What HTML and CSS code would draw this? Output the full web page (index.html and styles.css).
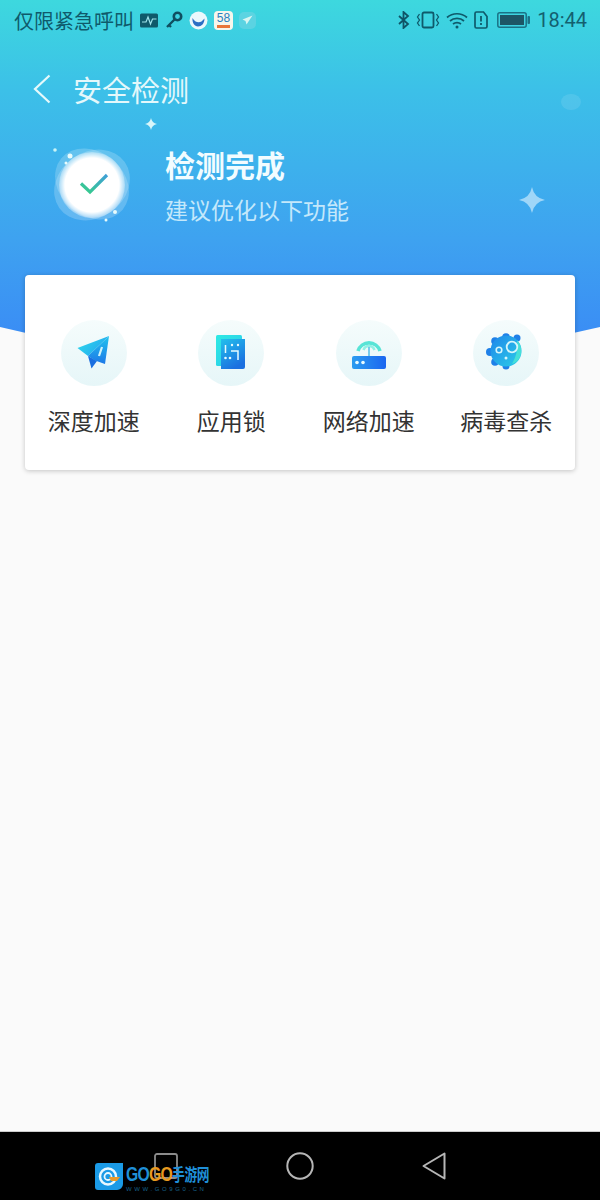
FILE: index.html
```html
<!doctype html>
<html lang="zh-CN">
  <head>
    <meta charset="utf-8" />
    <meta name="viewport" content="width=device-width, initial-scale=1.0" />
    <title>安全检测</title>
    <link rel="stylesheet" href="styles.css">
  </head>
  <body>
    <div id="page">
      <div id="hero">
        <div id="status-bar">
          <div class="status-left">
            <span class="status-text">仅限紧急呼叫</span>
            <svg class="s-pulse" width="19" height="15" viewBox="0 0 19 15"><rect width="18" height="14" y="0.5" rx="1.5" fill="#0f5a6b"/><path d="M2 9h4l2-5 2.500 7 2-5h4" fill="none" stroke="#9fe3ea" stroke-width="1.200"/></svg>
            <svg class="s-key" width="18" height="18" viewBox="0 0 18 18"><circle cx="12.500" cy="5.500" r="3.700" fill="none" stroke="#0f4f60" stroke-width="2.600"/><path d="M9.500 8.500 2 16M4 14l2 2" fill="none" stroke="#0f4f60" stroke-width="2.400"/></svg>
            <svg class="s-app" width="19" height="19" viewBox="0 0 19 19"><circle cx="9.500" cy="9.500" r="9" fill="#eaf8fc"/><path d="M3.500 7c2 4 6 5 9 3.500l3-3c0 5-3 8-6.500 8S3 11.500 3.500 7Z" fill="#2b6fc4"/></svg>
            <span class="app-58">58<i></i></span>
            <svg class="s-rocket" width="17" height="17" viewBox="0 0 17 17"><rect width="17" height="17" rx="5" fill="#6fd4e2" opacity=".6"/><path d="M13.500 3.500 3.500 7.500l3 1.500 1 3.500Z" fill="#d8f6f2"/></svg>
          </div>
          <div class="status-right">
            <svg width="12" height="18" viewBox="0 0 12 18"><path d="M1 5l9 8-4.500 4V1L10 5l-9 8" fill="none" stroke="#0f5466" stroke-width="1.800"/></svg>
            <svg width="24" height="18" viewBox="0 0 24 18"><rect x="6.500" y="1.500" width="11" height="15" rx="1.500" fill="none" stroke="#0f5a6b" stroke-width="1.800"/><path d="M3.500 3 1.500 6l2 3-2 3 2 3M20.500 3l2 3-2 3 2 3-2 3" fill="none" stroke="#0f5a6b" stroke-width="1.300"/></svg>
            <svg width="22" height="18" viewBox="0 0 22 18"><path d="M1 6.500c5.500-5 14.500-5 20 0M4 10c3.800-3.400 10.200-3.400 14 0M7 13c2.200-1.800 5.800-1.800 8 0" fill="none" stroke="#0f5a6b" stroke-width="1.700"/><circle cx="11" cy="16" r="1.500" fill="#0f5a6b"/></svg>
            <svg width="14" height="18" viewBox="0 0 14 18"><path d="M1 3v12.500a1.500 1.500 0 0 0 1.500 1.500h9a1.500 1.500 0 0 0 1.500-1.500V5.500L9.500 1h-7A1.500 1.500 0 0 0 1 2.500Z" fill="none" stroke="#0f5a6b" stroke-width="1.700"/><path d="M7 5v5.500M7 12v2" stroke="#0f5a6b" stroke-width="1.800"/></svg>
            <svg class="s-battery" width="33" height="16" viewBox="0 0 33 16"><rect x="0.800" y="0.800" width="28.400" height="14.400" rx="2" fill="none" stroke="#1b7286" stroke-width="1.500"/><rect x="3" y="3" width="24" height="10" fill="#1d5666"/><rect x="30.500" y="4" width="2.500" height="8" rx="1" fill="#1b7286"/></svg>
            <span class="status-time">18:44</span>
          </div>
        </div>

        <div id="title-bar">
          <svg width="18" height="30" viewBox="0 0 18 30"><path d="M16.500 1.500 2 15l14.500 13.500" fill="none" stroke="#e6f9fb" stroke-width="2.200"/></svg>
          <span class="title-text">安全检测</span>
        </div>

        <div id="result">
          <svg width="90" height="90" viewBox="0 0 90 90">
            <defs>
              <linearGradient id="check-grad" x1="0" y1="1" x2="1" y2="0">
                <stop offset="0" stop-color="#36cf86"/>
                <stop offset="1" stop-color="#3f9fd8"/>
              </linearGradient>
              <radialGradient id="disc-grad">
                <stop offset="0.820" stop-color="#fff"/>
                <stop offset="1" stop-color="#fff" stop-opacity=".3"/>
              </radialGradient>
            </defs>
            <ellipse cx="47" cy="44" rx="40" ry="32" fill="#fff" opacity=".2" transform="rotate(40 47 44)"/>
            <ellipse cx="47" cy="45" rx="40" ry="33" fill="#fff" opacity=".2" transform="rotate(-35 47 45)"/>
            <circle cx="47" cy="45" r="33" fill="url(#disc-grad)"/>
            <path d="M36 43.500l9 8.500L62 35" fill="none" stroke="url(#check-grad)" stroke-width="3.200"/>
            <circle cx="10" cy="10" r="1.800" fill="#c8f4f6"/>
            <circle cx="25" cy="16" r="2.500" fill="#e8fbfc"/>
            <circle cx="21" cy="23" r="1.500" fill="#e8fbfc"/>
            <circle cx="70" cy="72" r="2" fill="#e8fbfc"/>
            <circle cx="61" cy="80" r="1.500" fill="#e8fbfc"/>
          </svg>
          <div class="result-text">
            <div class="result-title">检测完成</div>
            <div class="result-sub">建议优化以下功能</div>
          </div>
        </div>

        <svg class="spark spark-small" width="12" height="12" viewBox="0 0 12 12"><path d="M6 0Q7 5 12 6 7 7 6 12 5 7 0 6 5 5 6 0Z" fill="#d8f6fa"/></svg>
        <svg class="spark spark-big" width="26" height="26" viewBox="0 0 12 12"><path d="M6 0Q7 5 12 6 7 7 6 12 5 7 0 6 5 5 6 0Z" fill="#9fd6f8"/></svg>
        <div class="blob"></div>
      </div>

      <div id="card">
        <div class="item">
          <div class="item-icon">
            <svg width="66" height="66" viewBox="0 0 66 66">
              <defs>
                <linearGradient id="plane-a" x1="0" y1="0" x2="1" y2="0.500"><stop offset="0" stop-color="#2fdcea"/><stop offset="1" stop-color="#24a8f0"/></linearGradient>
                <linearGradient id="plane-b" x1="0" y1="0" x2="0" y2="1"><stop offset="0" stop-color="#22c4ee"/><stop offset="1" stop-color="#1c78e8"/></linearGradient>
              </defs>
              <path d="M48 16 16.500 28 27 36Z" fill="url(#plane-a)"/>
              <path d="M27 36 30.500 48.500 36 41Z" fill="#1a6fe0"/>
              <path d="M48 16 27 36l7 4.500 10 3.500Z" fill="url(#plane-b)"/>
              <path d="M41 27l-3 9" stroke="#cdf3fb" stroke-width="2.200"/>
            </svg>
          </div>
          <div class="item-label">深度加速</div>
        </div>
        <div class="item">
          <div class="item-icon">
            <svg width="66" height="66" viewBox="0 0 66 66">
              <defs>
                <linearGradient id="lock-a" x1="0" y1="0" x2="1" y2="1"><stop offset="0" stop-color="#2eeae4"/><stop offset="1" stop-color="#2bc8ea"/></linearGradient>
                <linearGradient id="lock-b" x1="0" y1="0" x2="0.500" y2="1"><stop offset="0" stop-color="#22c0ec"/><stop offset="1" stop-color="#1b70e0"/></linearGradient>
              </defs>
              <rect x="18" y="15" width="26" height="31" rx="1.500" fill="url(#lock-a)"/>
              <path d="M23 19h24v28a2 2 0 0 1-2 2H23Z" fill="url(#lock-b)"/>
              <path d="M27.500 25v8M33 31h7v9" fill="none" stroke="#e6fbff" stroke-width="1.500"/>
              <circle cx="27.500" cy="38" r="1.300" fill="#e6fbff"/>
              <circle cx="32" cy="38" r="1.300" fill="#e6fbff"/>
              <circle cx="34" cy="25" r="1.200" fill="#e6fbff"/>
              <circle cx="40" cy="25" r="1.200" fill="#e6fbff"/>
            </svg>
          </div>
          <div class="item-label">应用锁</div>
        </div>
        <div class="item">
          <div class="item-icon">
            <svg width="66" height="66" viewBox="0 0 66 66">
              <defs>
                <linearGradient id="router-a" x1="0" y1="0" x2="1" y2="0"><stop offset="0" stop-color="#2b9cf0"/><stop offset="1" stop-color="#1b66f0"/></linearGradient>
              </defs>
              <path d="M22 31a11.500 11.500 0 0 1 22 0" fill="none" stroke="#58e4d6" stroke-width="3.600"/>
              <path d="M27.500 30a5.800 5.800 0 0 1 11 0" fill="none" stroke="#90f0e4" stroke-width="2.600"/>
              <path d="M33 27v10" stroke="#50bce8" stroke-width="1.500"/>
              <rect x="16" y="36" width="34" height="13" rx="2" fill="url(#router-a)"/>
              <circle cx="21" cy="42.500" r="1.800" fill="#e8fbff"/>
              <circle cx="27" cy="42.500" r="1.800" fill="#e8fbff"/>
            </svg>
          </div>
          <div class="item-label">网络加速</div>
        </div>
        <div class="item">
          <div class="item-icon">
            <svg width="66" height="66" viewBox="0 0 66 66">
              <defs>
                <linearGradient id="virus-a" x1="0" y1="0" x2="1" y2="1"><stop offset="0" stop-color="#1f86ea"/><stop offset="1" stop-color="#2bcfe8"/></linearGradient>
              </defs>
              <g fill="#1f80e8">
                <circle cx="33" cy="17" r="3.800"/>
                <circle cx="44" cy="18" r="3.500"/>
                <circle cx="22" cy="21" r="3.800"/>
                <circle cx="17" cy="32" r="4"/>
                <circle cx="22" cy="42" r="3.800"/>
                <circle cx="33" cy="46" r="3.500"/>
              </g>
              <circle cx="33" cy="31" r="15.500" fill="url(#virus-a)"/>
              <path d="M44 20a15.500 15.500 0 0 1 3 17c-2 4-5 6-8 7 4-7 6-14 5-24Z" fill="#46e0d8"/>
              <circle cx="39" cy="27" r="5.300" fill="none" stroke="#d6f6fb" stroke-width="1.800"/>
              <circle cx="26" cy="30" r="2.800" fill="none" stroke="#d6f6fb" stroke-width="1.600"/>
              <circle cx="33" cy="38" r="1.500" fill="#d6f6fb"/>
            </svg>
          </div>
          <div class="item-label">病毒查杀</div>
        </div>
      </div>

      <div id="body-fill"></div>

      <div id="nav-bar">
        <svg width="24" height="26" viewBox="0 0 24 26"><rect x="1" y="1" width="22" height="24" rx="2" fill="none" stroke="#8b8b8b" stroke-width="1.800"/></svg>
        <svg width="28" height="28" viewBox="0 0 28 28"><circle cx="14" cy="14" r="12.700" fill="none" stroke="#b6b6b6" stroke-width="2"/></svg>
        <svg width="24" height="28" viewBox="0 0 24 28"><path d="M22.500 1.500v25L1.500 14Z" fill="none" stroke="#b6b6b6" stroke-width="2" stroke-linejoin="round"/></svg>
        <div id="watermark">
          <svg width="28" height="27" viewBox="0 0 28 27"><path d="M3 0h25v21a6 6 0 0 1-6 6H3a3 3 0 0 1-3-3V3a3 3 0 0 1 3-3Z" fill="#1a9ae6"/><circle cx="13" cy="13.500" r="8" fill="none" stroke="#e8f8ff" stroke-width="2.500"/><circle cx="13" cy="13.500" r="3.500" fill="none" stroke="#e8f8ff" stroke-width="1.800"/><path d="M14 14h11l-3 4h-6Z" fill="#e89a2a"/></svg>
          <div class="wm-text">
            <div class="wm-name"><span class="wm-blue">GO</span><span class="wm-orange">GO</span><span class="wm-cn">手游网</span></div>
            <div class="wm-url">WWW.GO9G0.CN</div>
          </div>
        </div>
      </div>
    </div>
  </body>
</html>
```

FILE: styles.css
```css
/* body tags */
html, body { margin: 0; padding: 0; }
body {
    background: #fafafa;
    font-family: "Noto Sans CJK SC", "Noto Sans", sans-serif;
}
/* ids */
#page {
    display: flex;
    flex-direction: column;
    height: 1200px;
    overflow: hidden;
    width: 600px;
}
#hero {
    background: linear-gradient(180deg, #3dd8de 0%, #3cc0e8 90px, #3ea2f0 240px, #3a8cf5 340px);
    clip-path: path("M0 0H600V327Q300 400 0 327Z");
    flex: none;
    height: 364px;
    position: relative;
}
#status-bar {
    align-items: center;
    display: flex;
    height: 40px;
    justify-content: space-between;
    padding: 0 13px 0 14px;
}
#title-bar {
    align-items: center;
    display: flex;
    gap: 22px;
    height: 58px;
    margin-top: 20px;
    padding-left: 33px;
}
#result {
    align-items: flex-start;
    display: flex;
    gap: 30px;
    margin-top: 22px;
    padding-left: 45px;
}
#card {
    background: #fff;
    border-radius: 4px;
    box-shadow: 0 1px 5px rgba(0,0,0,0.22);
    display: grid;
    flex: none;
    grid-template-columns: repeat(4, 1fr);
    height: 195px;
    margin: -89px 25px 0 25px;
    position: relative;
}
#body-fill {
    flex: 1;
}
#nav-bar {
    align-items: center;
    background: #000;
    border-top: 1px solid #ccc;
    box-sizing: border-box;
    display: flex;
    flex: none;
    height: 69px;
    justify-content: space-between;
    padding: 0 154px;
    position: relative;
}
#watermark {
    align-items: flex-start;
    display: flex;
    gap: 3px;
    left: 95px;
    position: absolute;
    top: 31px;
}
/* classes */
.status-left, .status-right {
    align-items: center;
    display: flex;
}
.status-left { gap: 6px; }
.status-right { gap: 6px; }
.status-text {
    color: #0f5a6b;
    font-size: 20px;
    white-space: nowrap;
}
.status-time {
    color: #14606f;
    font-family: Roboto, sans-serif;
    font-size: 20px;
    margin-left: 1px;
}
.s-battery { margin-left: 3px; }
.app-58 {
    background: #f6f6ec;
    border-radius: 4px;
    color: #2a7fc0;
    display: block;
    font-family: "Liberation Sans", sans-serif;
    font-size: 12px;
    height: 19px;
    line-height: 14px;
    text-align: center;
    width: 19px;
}
.app-58 i {
    background: #e8763a;
    display: block;
    height: 3px;
    margin: 0 3px;
}
.title-text {
    color: #e4f8fb;
    font-size: 29px;
    line-height: 58px;
}
.result-title {
    color: #f2fcff;
    font-size: 30px;
    font-weight: 700;
    line-height: 40px;
    margin-bottom: 8px;
}
.result-sub {
    color: #c4e8fb;
    font-size: 23px;
    line-height: 34px;
}
.result-text { margin-top: 4px; }
.spark { position: absolute; }
.spark-small { left: 145px; top: 118px; }
.spark-big { left: 519px; top: 187px; }
.blob {
    background: rgba(255,255,255,0.1);
    border-radius: 50%;
    height: 16px;
    left: 561px;
    position: absolute;
    top: 94px;
    width: 20px;
}
.item {
    align-items: center;
    display: flex;
    flex-direction: column;
    padding-top: 45px;
}
.item-icon {
    background: linear-gradient(180deg, #f5fcfc, #e6f6f8);
    border-radius: 50%;
    height: 66px;
    width: 66px;
}
.item-icon svg { display: block; }
.item-label {
    color: #333;
    font-size: 23px;
    line-height: 34px;
    margin-top: 17px;
    white-space: nowrap;
}
.wm-text { width: 86px; }
.wm-name {
    font-family: "Liberation Sans", "Noto Sans CJK SC", sans-serif;
    font-size: 21px;
    font-weight: 700;
    letter-spacing: -1px;
    line-height: 21px;
    transform: scaleX(0.75);
    transform-origin: left center;
    white-space: nowrap;
}
.wm-blue { color: #1f8fd8; }
.wm-orange { color: #e89a20; }
.wm-cn {
    color: #1f8fd8;
    font-size: 17px;
    letter-spacing: -0.500px;
}
.wm-url {
    color: #16608c;
    font-family: "Liberation Sans", sans-serif;
    font-size: 6px;
    letter-spacing: 2.600px;
    line-height: 7px;
    white-space: nowrap;
}
```
